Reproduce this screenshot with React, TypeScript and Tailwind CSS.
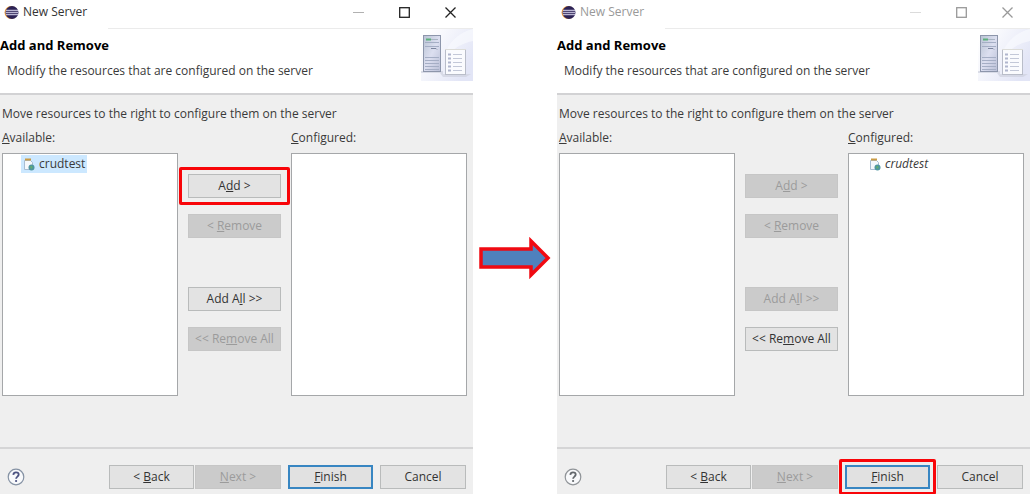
import { ReactNode } from "react";

interface DialogProps {
  id: string;
  active?: boolean;
  available: string[];
  configured: string[];
  highlight: "add" | "finish";
}

function EclipseIcon() {
  return (
    <svg width="15" height="15" viewBox="0 0 15 15" aria-hidden="true">
      <circle cx="7" cy="7.5" r="6.5" fill="#f4a13c" />
      <circle cx="8" cy="7.5" r="6.5" fill="#2c2255" />
      <path d="M2 5.3h12M1.6 7.5h12.8M2 9.7h12" stroke="#b9b5d2" strokeWidth="1.3" />
    </svg>
  );
}

function ServerBanner({ id }: { id: string }) {
  return (
    <svg width="52" height="52" viewBox="0 0 52 52" aria-hidden="true">
      <defs>
        <linearGradient id={id + "-bg"} x1="0" y1="0" x2="1" y2="0.6">
          <stop offset="0.1" stopColor="#ffffff" />
          <stop offset="1" stopColor="#e2e5f6" />
        </linearGradient>
        <linearGradient id={id + "-tower"} x1="0" y1="0" x2="1" y2="1">
          <stop offset="0" stopColor="#b9c3d3" />
          <stop offset="0.5" stopColor="#dcdff0" />
          <stop offset="1" stopColor="#b9bfd6" />
        </linearGradient>
      </defs>
      <rect width="52" height="52" fill={"url(#" + id + "-bg)"} />
      <path d="M24 24C30 10 40 3 52 0v12C42 14 34 18 28 26z" fill="#f8f9fe" opacity="0.7" />
      <path d="M0 42h22v3h28l-5 3H22l-3-4H0z" fill="#cfd1de" opacity="0.7" />
      <rect x="2.5" y="6.5" width="17" height="36" fill={"url(#" + id + "-tower)"} stroke="#8d96ab" />
      <path d="M5 10.5h5" stroke="#5db07c" strokeWidth="2" />
      <path d="M10 10.5h7" stroke="#a9b4c3" />
      <path d="M4 13.5h14M4 17.5h14M4 28.5h14M4 31.5h14M4 34.5h14M4 37.5h14M4 40.5h14" stroke="#a5aec5" />
      <path d="M10 19.5h5l1 1" stroke="#7c859f" fill="none" />
      <rect x="24.5" y="20.5" width="20" height="25" fill="#fafbfe" stroke="#b9bdc9" />
      <path d="M24 20.5h21" stroke="#dcdcd8" />
      <path d="M27 25.5h3M27 29.5h3M27 33.5h3M27 37.5h3M27 41.5h3" stroke="#b0b6cd" strokeWidth="2" />
      <path d="M32 25.5h9M32 29.5h9M32 33.5h9M32 37.5h9M32 41.5h9" stroke="#c3c8d8" />
    </svg>
  );
}

function ProjectIcon() {
  return (
    <svg width="12" height="13" viewBox="0 0 12 13" aria-hidden="true">
      <path d="M1.5 2.5h6l2 2v7h-8z" fill="#f5f8fc" stroke="#a8bdd3" />
      <path d="M2 1.5h6" stroke="#c99b45" strokeWidth="2" />
      <circle cx="8.5" cy="9.5" r="3" fill="#4f96a0" />
      <path d="M7 8.5l2-.5.5 1.5-1.5 1.5z" fill="#65b06a" />
    </svg>
  );
}

function Highlight({ children, on, box }: { children: ReactNode; on: boolean; box: string }) {
  return (
    <div className="relative flex flex-col">
      {children}
      {on && <div className={"absolute border-[3px] border-[#f80509] rounded-xs pointer-events-none " + box} />}
    </div>
  );
}

function Button({
  children,
  disabled,
  primary,
}: {
  children: ReactNode;
  disabled?: boolean;
  primary?: boolean;
}) {
  const color = disabled
    ? "bg-[#cbcbcb] border border-[#c6c6c6] text-[#9b9b9b]"
    : primary
      ? "bg-[#e1e1e1] border-2 border-[#3886c2] text-[#333]"
      : "bg-[#e3e3e3] border border-[#b9bbbb] text-[#333]";
  return (
    <button
      type="button"
      disabled={disabled}
      className={"w-full h-6 flex items-center justify-center whitespace-nowrap " + color}
    >
      <span className="whitespace-pre">{children}</span>
    </button>
  );
}

function ResourceList({
  id,
  label,
  items,
  selected,
}: {
  id: string;
  label: ReactNode;
  items: string[];
  selected?: boolean;
}) {
  return (
    <div className="flex-1 min-w-0">
      <div id={id} className="h-6 leading-6">
        {label}
      </div>
      <ul
        role="listbox"
        aria-labelledby={id}
        className="mt-[3px] h-[243px] bg-white border border-[#a5a7a9] pl-[18px] pt-px"
      >
        {items.map((item) => (
          <li
            key={item}
            role="option"
            aria-selected={!!selected}
            className={
              "w-fit h-[18px] flex items-center gap-1 px-0.5 " +
              (selected ? "bg-[#cce8ff]" : "italic")
            }
          >
            <ProjectIcon />
            {item}
          </li>
        ))}
      </ul>
    </div>
  );
}

function TitleBar({ active }: { active?: boolean }) {
  return (
    <div className="h-7 flex justify-between">
      <div className={"flex items-center h-6 pl-1 gap-1 " + (active ? "text-[#333]" : "text-[#999]")}>
        <EclipseIcon />
        <span>New Server</span>
      </div>
      <div className={"flex h-6 " + (active ? "text-[#222]" : "text-[#999]")}>
        <button type="button" aria-label="Minimize" className="w-[46px] flex items-center justify-center opacity-35">
          <svg width="11" height="11" stroke="currentColor">
            <path d="M0 5.5h11" />
          </svg>
        </button>
        <button type="button" aria-label="Maximize" className="w-[46px] flex items-center justify-center">
          <svg width="11" height="11" stroke="currentColor" fill="none" strokeWidth="1.3">
            <rect x="0.7" y="0.7" width="9.6" height="9.6" />
          </svg>
        </button>
        <button type="button" aria-label="Close" className="w-[46px] flex items-center justify-center">
          <svg width="11" height="11" stroke="currentColor" strokeWidth="1.3">
            <path d="M0.5 0.5l10 10M10.5 0.5l-10 10" />
          </svg>
        </button>
      </div>
    </div>
  );
}

function ServerDialog({ id, active, available, configured, highlight }: DialogProps) {
  const canAdd = available.length > 0;
  const canRemove = configured.length > 0;
  return (
    <section className="flex flex-col bg-[#efefef] min-w-0">
      <div className="bg-white">
        <TitleBar active={active} />
        <div className="ml-[108px] h-px bg-[#ebebeb]" />
        <div className="flex justify-between h-[66px] border-b-2 border-[#d2d2d4]">
          <div className="pt-1">
            <h1 className="font-bold text-[13px] text-black leading-6">Add and Remove</h1>
            <p className="pl-[7px] pt-0.5 leading-6">Modify the resources that are configured on the server</p>
          </div>
          <ServerBanner id={id} />
        </div>
      </div>

      <div className="pl-0.5 pr-1.5 pt-[7px]">
        <p className="leading-6">Move resources to the right to configure them on the server</p>
        <div className="flex gap-2.5">
          <ResourceList id={id + "-available"} label={<><u>A</u>vailable:</>} items={available} selected />
          <div className="w-[93px] flex flex-col gap-4 pt-12">
            <Highlight on={highlight === "add"} box="-inset-x-[9px] -inset-y-[7px]">
              <Button disabled={!canAdd}>A<u>d</u>d &gt;</Button>
            </Highlight>
            <Button disabled={!canRemove || highlight === "finish"}>&lt; <u>R</u>emove</Button>
            <div className="pt-[33px]">
              <Button disabled={!canAdd}>Add A<u>l</u>l &gt;&gt;</Button>
            </div>
            <Button disabled={!canRemove}>&lt;&lt; Re<u>m</u>ove All</Button>
          </div>
          <ResourceList id={id + "-configured"} label={<><u>C</u>onfigured:</>} items={configured} />
        </div>
      </div>

      <div className="mt-[51px] h-0.5 bg-[#d5d5d6]" />
      <div className="flex items-center px-[7px] pt-4 pb-1.5">
        <button type="button" aria-label="Help">
          <svg width="18" height="18" viewBox="0 0 18 18" fill="none">
            <circle cx="9" cy="9" r="7.8" fill="#f8f9fb" stroke={active ? "#8592a4" : "#909498"} strokeWidth="1.2" />
            <path
              d="M6.3 6.8C6.5 5.2 7.6 4.4 9 4.4c1.6 0 2.7.9 2.7 2.2 0 2-2.6 2.1-2.6 4.2"
              stroke={active ? "#4b5281" : "#62676c"}
              strokeWidth="1.8"
            />
            <circle cx="9.1" cy="13" r="1.1" fill={active ? "#4b5281" : "#62676c"} />
          </svg>
        </button>
        <div className="ml-auto flex gap-[7px]">
          <div className="flex gap-px">
            <div className="w-[85px]">
              <Button>&lt; <u>B</u>ack</Button>
            </div>
            <div className="w-[86px]">
              <Button disabled><u>N</u>ext &gt;</Button>
            </div>
          </div>
          <div className="w-[85px]">
            <Highlight on={highlight === "finish"} box="-inset-1.5">
              <Button primary><u>F</u>inish</Button>
            </Highlight>
          </div>
          <div className="w-[86px]">
            <Button>Cancel</Button>
          </div>
        </div>
      </div>
    </section>
  );
}

export default function App() {
  return (
    <main className="bg-white text-[#3a3a3a] text-[12px] font-['Open_Sans',sans-serif] grid grid-cols-[1fr_84px_1fr] pr-0.5">
      <ServerDialog id="before" active available={["crudtest"]} configured={[]} highlight="add" />
      <div className="flex justify-center pt-[237px]">
        <svg width="72" height="42" viewBox="0 0 72 42" aria-hidden="true">
          <path
            d="M2 12h50V4l17 17-17 17v-8H2z"
            fill="#4f81bd"
            stroke="#f00a12"
            strokeWidth="3.5"
          />
        </svg>
      </div>
      <ServerDialog id="after" available={[]} configured={["crudtest"]} highlight="finish" />
    </main>
  );
}
